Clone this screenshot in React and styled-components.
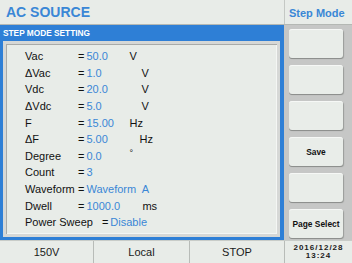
import React from 'react';
import styled, { createGlobalStyle } from 'styled-components';

const Global = createGlobalStyle`
  html, body {
    margin: 0;
    padding: 0;
    background: #e8ece8;
  }
  * {
    box-sizing: border-box;
  }
`;

const Screen = styled.div`
  width: 352px;
  height: 263px;
  display: flex;
  flex-direction: column;
  font-family: "Liberation Sans", Arial, sans-serif;
  background: #e8ece8;
  overflow: hidden;
`;

const Header = styled.div`
  height: 25px;
  display: flex;
  border-bottom: 1px solid #b4b8b4;
`;

const Title = styled.div`
  width: 284px;
  padding: 4px 0 0 6px;
  font-size: 14px;
  font-weight: bold;
  color: #3a87d6;
`;

const ModeTitle = styled.div`
  flex: 1;
  border-left: 1px solid #c4c8c4;
  padding: 7px 0 0 4px;
  font-size: 11px;
  font-weight: bold;
  color: #3a87d6;
  white-space: nowrap;
`;

const Main = styled.div`
  height: 215px;
  display: flex;
`;

const Panel = styled.div`
  width: 284px;
  background: #2e7fd6;
  display: flex;
  flex-direction: column;
  padding: 0 4px 3px 3px;
`;

const PanelTitle = styled.div`
  height: 16px;
  padding: 3px 0 0 0;
  font-size: 8.3px;
  font-weight: bold;
  color: #ffffff;
  white-space: nowrap;
`;

const Box = styled.div`
  flex: 1;
  background: #e8ece8;
  border: 3px solid #d6d8d6;
  box-shadow: inset 1px 1px 0 #a9aba9, inset -1px -1px 0 #f4f6f4;
  padding: 4px 0 0 19px;
`;

const Row = styled.div`
  height: 16.6px;
  display: flex;
  align-items: center;
  font-size: 11px;
  white-space: nowrap;
`;

const Label = styled.span`
  min-width: 53px;
  margin-right: ${p => p.$gap || 0}px;
  color: #111;
`;

const Eq = styled.span`
  color: #111;
  margin-right: 2px;
`;

const Value = styled.span`
  min-width: 43px;
  color: #3a87d6;
  white-space: pre;
`;

const Unit = styled.span`
  margin-left: ${p => p.$shift || 0}px;
  color: #111;
  font-size: ${p => (p.$small ? 9 : 11)}px;
  align-self: ${p => (p.$small ? 'flex-start' : 'center')};
  margin-top: ${p => (p.$small ? 0 : 0)}px;
`;

const Side = styled.div`
  flex: 1;
  background: #c6c7c6;
  padding: 4px 9px 0 5px;
  display: flex;
  flex-direction: column;
  gap: 7px;
`;

const SoftKey = styled.div`
  height: 29px;
  border-radius: 3px;
  background: #e9ede9;
  box-shadow: 0 1px 0 #8e908e, 1px 1px 1px #9a9c9a, inset 0 1px 0 #f6f8f6;
  display: flex;
  align-items: center;
  justify-content: center;
  font-size: 8.4px;
  font-weight: bold;
  color: #111;
  white-space: nowrap;
`;

const Footer = styled.div`
  flex: 1;
  display: flex;
  border-top: 1px solid #c8ccc8;
`;

const Cell = styled.div`
  width: ${p => p.$w}px;
  border-left: ${p => (p.$first ? 'none' : '1px solid #b8bcb8')};
  display: flex;
  flex-direction: column;
  align-items: center;
  justify-content: center;
  font-size: ${p => (p.$small ? 8 : 11)}px;
  font-weight: ${p => (p.$small ? 'bold' : 'normal')};
  letter-spacing: ${p => (p.$small ? 1 : 0)}px;
  line-height: ${p => (p.$small ? 8 : 12)}px;
  color: #1a1a1a;
`;

const rows = [
  { label: 'Vac', value: '50.0', unit: 'V' },
  { label: 'ΔVac', value: '1.0', unit: 'V', shift: 12 },
  { label: 'Vdc', value: '20.0', unit: 'V', shift: 12 },
  { label: 'ΔVdc', value: '5.0', unit: 'V', shift: 12 },
  { label: 'F', value: '15.00', unit: 'Hz' },
  { label: 'ΔF', value: '5.00', unit: 'Hz', shift: 10 },
  { label: 'Degree', value: '0.0', unit: '°', small: true },
  { label: 'Count', value: '3' },
  { label: 'Waveform', value: 'Waveform  A' },
  { label: 'Dwell', value: '1000.0', unit: 'ms', shift: 13 },
  { label: 'Power Sweep', value: 'Disable', gap: 9 },
];

const keys = ['', '', '', 'Save', '', 'Page Select'];

export default function App() {
  return (
    <Screen>
      <Global />
      <Header>
        <Title>AC SOURCE</Title>
        <ModeTitle>Step Mode</ModeTitle>
      </Header>
      <Main>
        <Panel>
          <PanelTitle>STEP MODE SETTING</PanelTitle>
          <Box>
            {rows.map(r => (
              <Row key={r.label}>
                <Label $gap={r.gap}>{r.label}</Label>
                <Eq>=</Eq>
                <Value>{r.value}</Value>
                {r.unit && (
                  <Unit $shift={r.shift} $small={r.small}>
                    {r.unit}
                  </Unit>
                )}
              </Row>
            ))}
          </Box>
        </Panel>
        <Side>
          {keys.map((k, i) => (
            <SoftKey key={i}>{k}</SoftKey>
          ))}
        </Side>
      </Main>
      <Footer>
        <Cell $w={93} $first>150V</Cell>
        <Cell $w={96}>Local</Cell>
        <Cell $w={95}>STOP</Cell>
        <Cell $w={68} $small>
          <span>2016/12/28</span>
          <span>13:24</span>
        </Cell>
      </Footer>
    </Screen>
  );
}
